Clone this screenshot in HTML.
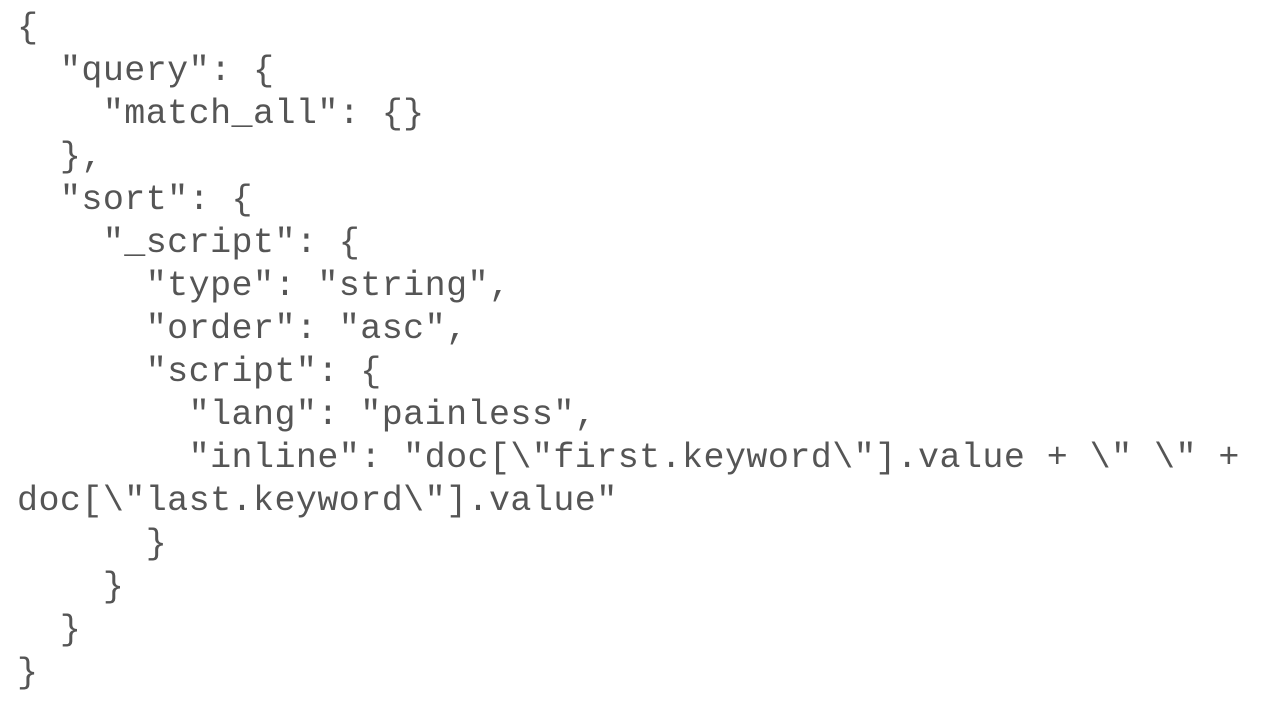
<!DOCTYPE html>
<html><head><style>
html,body{margin:0;padding:0;background:#fff;width:1266px;height:702px;overflow:hidden}
pre{margin:0;position:absolute;left:17px;top:7px;font-family:"Liberation Mono",monospace;font-size:35px;letter-spacing:0.45px;line-height:43px;color:#555;white-space:pre}
</style></head><body>
<pre>{
  "query": {
    "match_all": {}
  },
  "sort": {
    "_script": {
      "type": "string",
      "order": "asc",
      "script": {
        "lang": "painless",
        "inline": "doc[\"first.keyword\"].value + \" \" +
doc[\"last.keyword\"].value"
      }
    }
  }
}</pre>
</body></html>
